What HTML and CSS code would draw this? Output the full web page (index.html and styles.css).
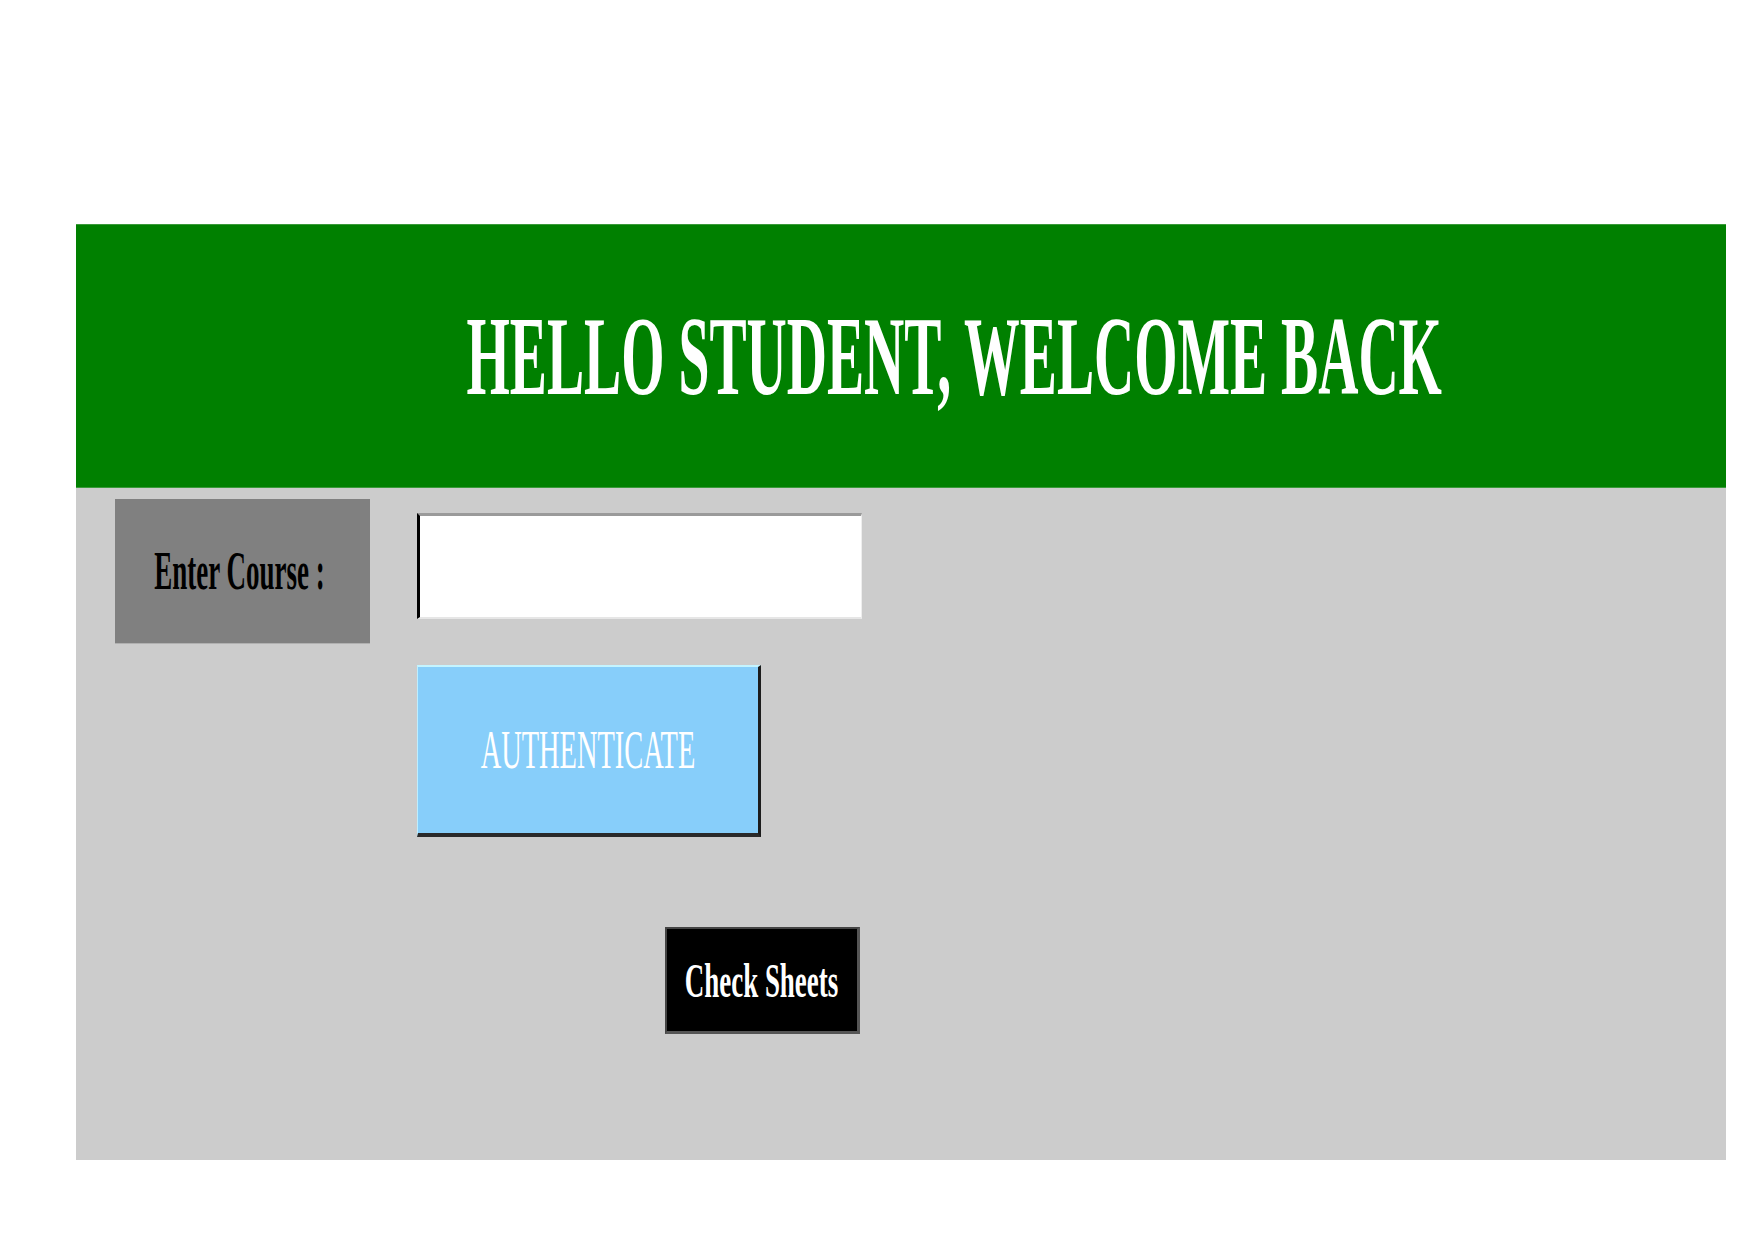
FILE: index.html
```html
<!DOCTYPE html>
<html lang="en">
<head>
<meta charset="utf-8">
<title>Student</title>
<link rel="stylesheet" href="styles.css">
</head>
<body>
<div class="page">
  <header class="banner">
    <h1 class="title"><span class="squeeze sq-title">HELLO STUDENT, WELCOME BACK</span></h1>
  </header>
  <main class="panel">
    <div class="row">
      <div class="label"><span class="squeeze sq-label">Enter Course :</span></div>
      <input class="course" type="text">
    </div>
    <button class="auth" type="button"><span class="squeeze sq-auth">AUTHENTICATE</span></button>
    <button class="check" type="button"><span class="squeeze sq-check">Check Sheets</span></button>
  </main>
</div>
</body>
</html>
```

FILE: styles.css
```css
html, body {
  margin: 0;
  padding: 0;
  background: #ffffff;
}

body {
  font-family: "Liberation Serif", "Times New Roman", serif;
}

.page {
  padding: 224px 28px 0 76px;
  overflow: hidden;
  height: 1016px;
}

.squeeze {
  display: inline-block;
  white-space: nowrap;
  line-height: 1;
  flex: none;
}

.banner {
  height: 264px;
  background: #008000;
  display: flex;
  align-items: center;
  justify-content: center;
  padding-left: 106px;
  box-sizing: border-box;
  box-shadow: inset 0 1px 0 #3a9a3a, inset 0 -1px 0 #3a9a3a;
}

.title {
  margin: 0;
  display: flex;
  justify-content: center;
  color: #ffffff;
  font-size: 112px;
  font-weight: bold;
  line-height: 1;
}

.sq-title {
  transform: scaleX(0.497);
}

.panel {
  height: 672px;
  background: #cccccc;
  padding: 11px 0 0 39px;
  box-sizing: border-box;
  display: flex;
  flex-direction: column;
  align-items: flex-start;
}

.row {
  display: flex;
  align-items: flex-start;
  gap: 47px;
}

.label {
  width: 255px;
  height: 144px;
  box-sizing: border-box;
  padding-right: 7px;
  background: #808080;
  display: flex;
  align-items: center;
  justify-content: center;
  color: #000000;
  font-size: 54px;
  font-weight: bold;
  box-shadow: 0 1px 0 #b0b0b0;
}

.sq-label {
  transform: scaleX(0.5);
}

.course {
  margin: 14px 0 0 0;
  width: 445px;
  height: 106px;
  box-sizing: border-box;
  background: #ffffff;
  border-style: solid;
  border-width: 3px 1px 2px 3px;
  border-color: #9a9a9a #eeeeee #e6e6e6 #000000;
  padding: 0;
  outline: none;
}

.auth {
  margin: 22px 0 0 302px;
  width: 344px;
  height: 172px;
  box-sizing: border-box;
  background: #87cefa;
  border-style: solid;
  border-width: 2px 3px 4px 1px;
  border-color: #c4f4ff #1c1c1c #2a2a2a #bdeeff;
  padding: 0;
  display: flex;
  align-items: center;
  justify-content: center;
  color: #ffffff;
  font-family: "Liberation Serif", "Times New Roman", serif;
  font-size: 54px;
  font-weight: normal;
}

.sq-auth {
  transform: scaleX(0.526);
}

.check {
  margin: 90px 0 0 550px;
  width: 195px;
  height: 107px;
  box-sizing: border-box;
  background: #000000;
  border-style: solid;
  border-width: 2px 3px 3px 2px;
  border-color: #444444 #555555 #555555 #444444;
  padding: 0;
  display: flex;
  align-items: center;
  justify-content: center;
  color: #ffffff;
  font-family: "Liberation Serif", "Times New Roman", serif;
  font-size: 49px;
  font-weight: bold;
}

.sq-check {
  transform: scaleX(0.55);
}
```
